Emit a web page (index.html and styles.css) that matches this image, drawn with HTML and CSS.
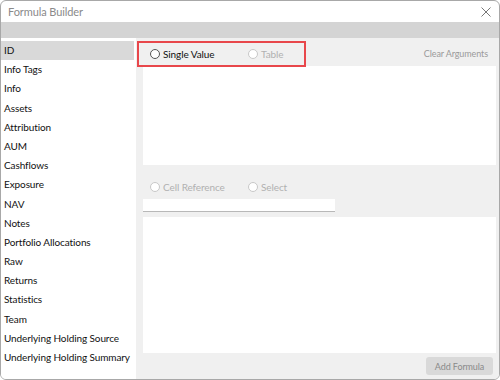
FILE: index.html
```html
<!DOCTYPE html>
<html lang="en">
<head>
    <meta charset="UTF-8">
    <title>Formula Builder</title>
    <link rel="stylesheet" href="styles.css">
</head>
<body>
    <div class="window">
        <div class="titlebar">
            <span class="title">Formula Builder</span>
            <svg class="close" width="10" height="10" viewBox="0 0 10 10">
                <path d="M0.5 0.5 L9.5 9.5 M9.5 0.5 L0.5 9.5" stroke="#777" stroke-width="1" fill="none"/>
            </svg>
        </div>
        <div class="toolbar"></div>
        <div class="main">
            <ul class="categories">
                <li class="selected">ID</li>
                <li>Info Tags</li>
                <li>Info</li>
                <li>Assets</li>
                <li>Attribution</li>
                <li>AUM</li>
                <li>Cashflows</li>
                <li>Exposure</li>
                <li>NAV</li>
                <li>Notes</li>
                <li>Portfolio Allocations</li>
                <li>Raw</li>
                <li>Returns</li>
                <li>Statistics</li>
                <li>Team</li>
                <li>Underlying Holding Source</li>
                <li>Underlying Holding Summary</li>
            </ul>
            <div class="editor">
                <div class="mode-row">
                    <div class="mode-group">
                        <label class="radio"><span class="dot"></span>Single Value</label>
                        <label class="radio disabled"><span class="dot"></span>Table</label>
                    </div>
                    <span class="clear">Clear Arguments</span>
                </div>
                <div class="arguments"></div>
                <div class="ref-row">
                    <label class="radio disabled"><span class="dot"></span>Cell Reference</label>
                    <label class="radio disabled"><span class="dot"></span>Select</label>
                </div>
                <div class="ref-input"></div>
                <div class="preview"></div>
                <div class="footer">
                    <button class="add">Add Formula</button>
                </div>
            </div>
        </div>
    </div>
</body>
</html>
```

FILE: styles.css
```css
body {
    margin: 0;
    font-family: Lato, "Noto Sans", sans-serif;
    font-size: 10px;
    letter-spacing: -0.1px;
    color: #111;
    background: #ffffff;
}
.window {
    width: 498px;
    height: 378px;
    border: 1px solid #a8a8a8;
    border-radius: 6px;
    overflow: hidden;
    display: flex;
    flex-direction: column;
    background: white;
}
.titlebar {
    height: 21px;
    display: flex;
    align-items: center;
    justify-content: space-between;
    padding: 0 8px 0 7px;
}
.title {
    color: #8a8a8a;
    font-size: 11px;
}
.toolbar {
    height: 16px;
    background: #d4d4d4;
}
.main {
    flex: 1;
    display: flex;
    min-height: 0;
}
.categories {
    list-style: none;
    margin: 0;
    padding: 3px 0 0;
    width: 135px;
    background: white;
}
.categories li {
    height: 19.2px;
    line-height: 19.4px;
    padding-left: 3px;
    margin: 0 2px 0 0;
    white-space: nowrap;
}
.categories li.selected {
    background: #d9d9d9;
}
.editor {
    flex: 1;
    background: #f0f0f0;
    display: flex;
    flex-direction: column;
    padding: 0 3px 0 7px;
}
.mode-row {
    height: 28px;
    padding-top: 3px;
    box-sizing: border-box;
    display: flex;
    align-items: flex-start;
    justify-content: space-between;
}
.mode-group {
    display: flex;
    align-items: center;
    box-sizing: border-box;
    margin-left: -6px;
    width: 169px;
    height: 26px;
    padding-left: 11px;
    border: 2px solid #e8474b;
    position: relative;
    z-index: 1;
}
.radio {
    display: flex;
    align-items: center;
    gap: 3px;
    white-space: nowrap;
}
.radio:first-child {
    width: 98px;
}
.radio .dot {
    width: 8px;
    height: 8px;
    border: 1px solid #555;
    border-radius: 50%;
    background: white;
}
.radio.disabled {
    color: #b0b0b0;
}
.radio.disabled .dot {
    border-color: #c8c8c8;
}
.clear {
    color: #9a9a9a;
    font-size: 9px;
    padding: 7px 8px 0 0;
}
.arguments {
    height: 99px;
    background: white;
}
.ref-row {
    height: 34px;
    display: flex;
    align-items: flex-end;
    padding: 0 0 6px 7px;
    box-sizing: border-box;
}
.ref-input {
    width: 192px;
    height: 12px;
    background: white;
    border-bottom: 1px solid #b8b8b8;
}
.preview {
    margin-top: 5px;
    height: 136px;
    background: white;
}
.footer {
    flex: 1;
    display: flex;
    justify-content: flex-end;
    align-items: center;
    padding-right: 3px;
}
.add {
    font-family: inherit;
    font-size: 9px;
    letter-spacing: -0.1px;
    color: #8a8a8a;
    background: #d9d9d9;
    border: none;
    border-radius: 3px;
    width: 67px;
    height: 18px;
    padding: 0;
}
```
